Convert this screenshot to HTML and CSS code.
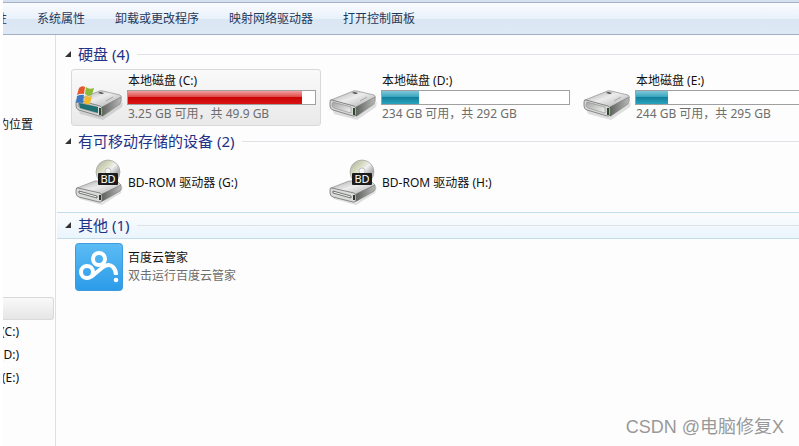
FILE: index.html
```html
<!DOCTYPE html>
<html lang="zh-CN">
<head>
    <meta charset="UTF-8">
    <meta name="viewport" content="width=device-width, initial-scale=1.0">
    <title>计算机</title>
    <link rel="stylesheet" href="styles.css">
</head>
<body>

<!-- shared icons -->
<svg class="defs" width="0" height="0" aria-hidden="true">
    <defs>
        <linearGradient id="metal" x1="0" y1="0" x2="1" y2="1">
            <stop offset="0" stop-color="#a8a8a8"/>
            <stop offset=".45" stop-color="#ececec"/>
            <stop offset="1" stop-color="#a4a6a4"/>
        </linearGradient>
        <linearGradient id="side" x1="0" y1="0" x2="1" y2="0">
            <stop offset="0" stop-color="#5c5e5c"/>
            <stop offset="1" stop-color="#b8bab8"/>
        </linearGradient>
        <linearGradient id="front" x1="0" y1="0" x2="1" y2="1">
            <stop offset="0" stop-color="#a2a4a2"/>
            <stop offset="1" stop-color="#f2f2f2"/>
        </linearGradient>
        <linearGradient id="disc" x1="0" y1="0" x2="1" y2="1">
            <stop offset="0" stop-color="#a9a9a9"/>
            <stop offset=".3" stop-color="#d2d6b8"/>
            <stop offset=".5" stop-color="#f0f0f0"/>
            <stop offset=".7" stop-color="#adadad"/>
            <stop offset="1" stop-color="#dedede"/>
        </linearGradient>
        <linearGradient id="sky" x1="0" y1="0" x2="0" y2="1">
            <stop offset="0" stop-color="#5cbcf4"/>
            <stop offset="1" stop-color="#2b9be9"/>
        </linearGradient>
    </defs>
    <symbol id="disk" viewBox="0 0 48 48">
        <path d="M3 35 L27 43 L48 28 L47 33 L28 46 L5 40Z" fill="#000" opacity=".12"/>
        <path d="M2 26 L22 18 Q25 16 28 17 L45 21 Q47 22 46 24 L27 34Z" fill="url(#metal)" stroke="#8d8f8d" stroke-width=".7"/>
        <path d="M27 33 L46 23 Q47 27 45 30 L28 42 Q26 43 26 40Z" fill="url(#side)" stroke="#777" stroke-width=".6"/>
        <path d="M3 26 L25 32 Q27 33 27 35 V40 Q27 43 24 42 L4 36 Q1 35 1 32 V28 Q1 25 3 26Z" fill="#d6d8d6" stroke="#707270" stroke-width=".8"/>
        <path d="M4 28 L22 33 V39 L5 34 Q3 33 3 31Z" fill="url(#front)" stroke="#8a8c8a" stroke-width=".6"/>
        <path d="M25 34V41" stroke="#2d4a2d" stroke-width="2"/>
        <path d="M25 18 L29 19 L27 20 L23 19Z" fill="#444"/>
        <path d="M31 27 L38 23" stroke="#9a9a9a" stroke-width=".8"/>
    </symbol>
    <symbol id="flag" viewBox="0 0 48 48">
        <path d="M4 29 L23 33 V39 L5 34Z" fill="#1f6f73"/>
        <path d="M4 14 Q7 11 10 13 L9 20 Q6 19 2 21Z" fill="#e2582c"/>
        <path d="M11 13 Q14 16 19 14 L17 21 Q13 23 10 20Z" fill="#8cbb3a"/>
        <path d="M2 22 Q6 20 9 21 L8 29 Q4 28 1 29Z" fill="#3a78c4"/>
        <path d="M10 21 Q12 24 17 22 L15 30 Q11 31 9 29Z" fill="#f0b92e"/>
    </symbol>
    <symbol id="bd" viewBox="0 0 48 48">
        <circle cx="33" cy="13" r="12" fill="url(#disc)" stroke="#a2a2a2" stroke-width=".7"/>
        <circle cx="33" cy="12" r="3" fill="#f4f4f4" stroke="#b0b0b0" stroke-width=".7"/>
        <path d="M3 36 L27 44 L48 28 L46 34 L27 46 L5 40Z" fill="#000" opacity=".12"/>
        <path d="M2 29 L20 22 H42 L46 26 L27 36Z" fill="url(#metal)" stroke="#8d8f8d" stroke-width=".7"/>
        <path d="M27 35 L46 26 Q47 30 45 32 L28 42 Q26 43 26 40Z" fill="url(#side)" stroke="#777" stroke-width=".6"/>
        <path d="M3 29 L25 34 Q27 35 27 37 V41 Q27 44 24 43 L4 38 Q1 37 1 34 V31 Q1 28 3 29Z" fill="#d9dbd9" stroke="#707270" stroke-width=".8"/>
        <path d="M4 32 L22 37 V39 L4 34Z" fill="#f2f2f2" stroke="#555" stroke-width=".8"/>
        <path d="M25 36V41" stroke="#333" stroke-width="2"/>
        <rect x="23" y="14" width="20" height="12" rx="1" fill="#1c1c1c"/>
        <text x="33" y="24" text-anchor="middle" font-size="11" fill="#fff">BD</text>
    </symbol>
</svg>

<div class="window">
    <div class="toolbar">
        <button class="cut">性</button>
        <button>系统属性</button>
        <button>卸载或更改程序</button>
        <button>映射网络驱动器</button>
        <button>打开控制面板</button>
    </div>

    <div class="main">
        <nav class="sidebar">
            <a href="#" class="recent">的位置</a>
            <a href="#" class="active" aria-label="计算机"></a>
            <a href="#" class="drive">(C:)</a>
            <a href="#" class="drive">(D:)</a>
            <a href="#" class="drive">(E:)</a>
        </nav>

        <div class="content">
            <section>
                <h2>硬盘 (4)</h2>
                <div class="items">
                    <div class="item selected">
                        <svg class="icon"><use href="#disk"/><use href="#flag"/></svg>
                        <div class="info">
                            <p>本地磁盘 (C:)</p>
                            <div class="bar full"><div style="width: 93%"></div></div>
                            <p class="gray">3.25 GB 可用，共 49.9 GB</p>
                        </div>
                    </div>
                    <div class="item">
                        <svg class="icon"><use href="#disk"/></svg>
                        <div class="info">
                            <p>本地磁盘 (D:)</p>
                            <div class="bar"><div style="width: 20%"></div></div>
                            <p class="gray">234 GB 可用，共 292 GB</p>
                        </div>
                    </div>
                    <div class="item">
                        <svg class="icon"><use href="#disk"/></svg>
                        <div class="info">
                            <p>本地磁盘 (E:)</p>
                            <div class="bar"><div style="width: 17%"></div></div>
                            <p class="gray">244 GB 可用，共 295 GB</p>
                        </div>
                    </div>
                </div>
            </section>

            <section>
                <h2>有可移动存储的设备 (2)</h2>
                <div class="items">
                    <div class="item">
                        <svg class="icon"><use href="#bd"/></svg>
                        <div class="info"><p>BD-ROM 驱动器 (G:)</p></div>
                    </div>
                    <div class="item">
                        <svg class="icon"><use href="#bd"/></svg>
                        <div class="info"><p>BD-ROM 驱动器 (H:)</p></div>
                    </div>
                </div>
            </section>

            <section>
                <h2 class="hover">其他 (1)</h2>
                <div class="items">
                    <div class="item">
                        <svg class="icon" viewBox="0 0 48 48">
                            <rect x=".5" y=".5" width="47" height="47" rx="3" fill="url(#sky)" stroke="#3f9bdc"/>
                            <g fill="none" stroke="#fff" stroke-width="4">
                                <circle cx="12" cy="29" r="6"/>
                                <circle cx="24" cy="16" r="6"/>
                                <path d="M16 34 L28 24 Q34 20 38 24 Q41 27 41 32"/>
                            </g>
                            <circle cx="41" cy="37" r="2.300" fill="#fff"/>
                        </svg>
                        <div class="info">
                            <p>百度云管家</p>
                            <p class="gray">双击运行百度云管家</p>
                        </div>
                    </div>
                </div>
            </section>
        </div>
    </div>

    <div class="watermark">CSDN @电脑修复X</div>
</div>

</body>
</html>
```
FILE: styles.css
```css
* {
    box-sizing: border-box;
}

body {
    margin: 0;
    padding-left: 3px;
    background: #fff;
    color: #111;
    font: 12px/18px "Noto Sans", "Noto Sans CJK SC", sans-serif;
}

h2, p {
    margin: 0;
    font-weight: normal;
    white-space: nowrap;
}

.defs {
    position: absolute;
}

.window {
    position: relative;
    display: flex;
    flex-direction: column;
    min-height: 100vh;
    overflow: hidden;
    background: #fdfdfd;
    border-top: 2px solid #d5e0f0;
}

/* toolbar */
.toolbar {
    display: flex;
    align-items: center;
    gap: 30px;
    height: 33px;
    border-top: 1px solid #a3b2c8;
    border-bottom: 1px solid #a0afc3;
    background: linear-gradient(#fafcff, #e9f1fb 50%, #dbe6f4 52%, #dfe9f6);
}

.toolbar button {
    padding: 0;
    border: 0;
    background: none;
    color: #1e395b;
    font: inherit;
    white-space: nowrap;
}

.toolbar .cut {
    display: flex;
    justify-content: flex-end;
    width: 4px;
    overflow: hidden;
}

.main {
    display: flex;
    flex: 1;
}

/* left tree */
.sidebar {
    flex: none;
    width: 53px;
    padding-top: 78px;
    border-right: 1px solid #d8e2ee;
}

.sidebar a {
    display: flex;
    justify-content: flex-end;
    height: 23px;
    line-height: 23px;
    overflow: hidden;
    color: #111;
    text-decoration: none;
    white-space: nowrap;
}

.sidebar .recent {
    width: 30px;
    margin-bottom: 161px;
}

.sidebar .drive {
    width: 16px;
}

.sidebar .active {
    margin-right: 1px;
    border: 1px solid #d9d9d9;
    border-left: 0;
    border-radius: 0 3px 3px 0;
    background: linear-gradient(#f9f9f9, #e6e6e6);
}

/* groups */
.content {
    flex: 1;
    min-width: 0;
    padding: 6px 0 0 1px;
    overflow: hidden;
}

section {
    padding-bottom: 2px;
}

h2 {
    display: flex;
    align-items: center;
    height: 27px;
    padding: 0 0 1px 8px;
    border: 1px solid transparent;
    border-width: 1px 0;
    color: #1e3287;
    font-size: 15px;
}

h2::before {
    content: "";
    width: 6px;
    height: 6px;
    margin-right: 7px;
    background: #333;
    clip-path: polygon(100% 0, 100% 100%, 0 100%);
}

h2::after {
    content: "";
    flex: 1;
    height: 1px;
    margin-left: 8px;
    background: #dfe3e8;
}

h2.hover {
    border-color: #c3dcec;
    background: linear-gradient(#fafcfe, #eaf5fc);
}

.items {
    display: grid;
    grid-template-columns: repeat(3, 250px);
    gap: 4px;
    padding: 1px 0 0 14px;
}

.item {
    display: flex;
    align-items: center;
    gap: 4px;
    padding: 2px 4px 2px 3px;
    border: 1px solid transparent;
    border-radius: 3px;
}

.item.selected {
    border-color: #d9d9d9;
    background: linear-gradient(#fafafa, #e9e9e9);
}

.icon {
    flex: none;
    width: 48px;
    height: 48px;
}

.info {
    flex: 1;
}

.info p {
    padding-left: 1px;
}

.info .gray {
    color: #6d6d6d;
}

.bar {
    height: 15px;
    border: 1px solid #a0a0a0;
    background: #fff;
}

.bar div {
    height: 100%;
    background: linear-gradient(#7cc8d8, #3aa5bd 45%, #12809c 50%, #2aa3bf);
}

.bar.full div {
    background: linear-gradient(#f3a0a0, #e04a4a 45%, #cc0505 50%, #d81414);
}

.watermark {
    position: absolute;
    right: 15px;
    bottom: 6px;
    color: #999;
    font: 18px/26px "Liberation Sans", "Noto Sans CJK SC", sans-serif;
}
```
